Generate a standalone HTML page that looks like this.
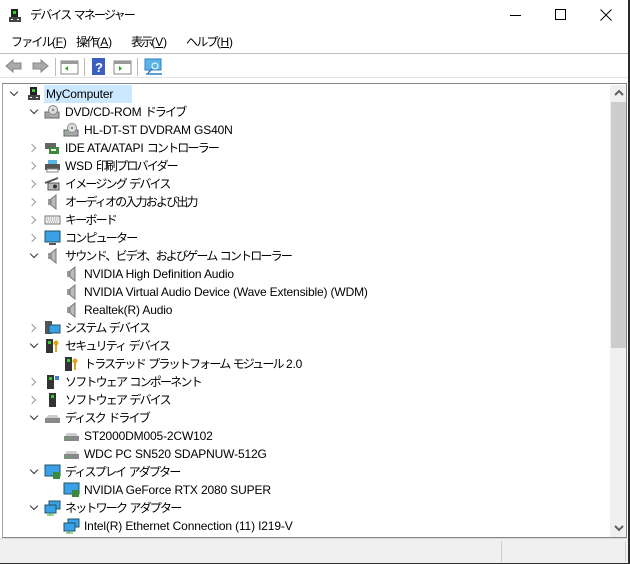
<!DOCTYPE html>
<html><head><meta charset="utf-8"><style>
*{margin:0;padding:0;box-sizing:border-box}
body{width:630px;height:564px;background:#fff;position:relative;overflow:hidden;font-family:"Liberation Sans","Noto Sans CJK JP",sans-serif;font-size:12px;color:#000}
.a{position:absolute}
.t{position:absolute;white-space:nowrap;line-height:18px;height:18px;letter-spacing:-0.15px}
.j{letter-spacing:-1.8px}
.arr{position:absolute;width:6px;height:6px;border-right:1.3px solid #999;border-bottom:1.3px solid #999}
.r{transform:rotate(-45deg)}
.d{transform:rotate(45deg);border-color:#333}
</style></head><body>
<div class="a" style="right:0;top:0;width:2px;height:564px;background:#2b2b2b"></div>
<div class="a" style="left:0;bottom:0;width:630px;height:1px;background:#2b2b2b"></div>
<svg class="a" style="left:8px;top:8px" width="14" height="16"><rect x="3" y="1" width="7" height="8" fill="#222"/><rect x="5" y="3" width="3" height="3" fill="#3c3"/><rect x="1" y="9" width="12" height="5" fill="#444"/><rect x="3" y="11" width="2" height="1" fill="#fff"/><rect x="9" y="11" width="2" height="1" fill="#fff"/></svg>
<div class="t" style="left:30px;top:6px">デバイス マネージャー</div>
<div class="a" style="left:510px;top:15px;width:11px;height:1px;background:#000"></div>
<div class="a" style="left:555px;top:9px;width:11px;height:11px;border:1px solid #000"></div>
<svg class="a" style="left:600px;top:9px" width="12" height="12"><path d="M0.5 0.5L11.5 11.5M11.5 0.5L0.5 11.5" stroke="#000"/></svg>
<div class="t" style="left:11px;top:33px">ファイル(<u>F</u>)</div>
<div class="t" style="left:76px;top:33px">操作(<u>A</u>)</div>
<div class="t" style="left:131px;top:33px">表示(<u>V</u>)</div>
<div class="t" style="left:186px;top:33px">ヘルプ(<u>H</u>)</div>
<div class="a" style="left:0;top:53px;width:628px;height:1px;background:#bcbcbc"></div>
<svg class="a" style="left:4px;top:57px" width="170" height="20">
<path d="M2 9L9 3V6H17V12H9V15Z" fill="#aaa" stroke="#888"/>
<path d="M44 9L37 3V6H29V12H37V15Z" fill="#aaa" stroke="#888"/>
<rect x="51" y="1" width="1" height="18" fill="#bbb"/>
<rect x="57" y="4" width="17" height="13" fill="#fff" stroke="#888"/><rect x="57" y="4" width="17" height="3" fill="#999"/><path d="M64 9L61 11.5L64 14Z" fill="#2a2"/>
<rect x="80" y="1" width="1" height="18" fill="#bbb"/>
<rect x="88" y="1" width="13" height="17" fill="#3b5fc0"/><text x="91" y="15" fill="#fff" font-size="13" font-weight="bold" font-family="Liberation Sans">?</text>
<rect x="110" y="4" width="17" height="13" fill="#fff" stroke="#888"/><rect x="110" y="4" width="17" height="3" fill="#999"/><path d="M115 9L118 11.5L115 14Z" fill="#2a2"/>
<rect x="133" y="1" width="1" height="18" fill="#bbb"/>
<rect x="141" y="2" width="16" height="11" fill="#5ab4e6" stroke="#2f7fc0"/><circle cx="151" cy="9" r="3" fill="none" stroke="#fff"/><path d="M148 12L144 16M142 17H158" stroke="#2f7fc0" stroke-width="1.5"/>
</svg>
<div class="a" style="left:0;top:77px;width:628px;height:1px;background:#e3e3e3"></div>
<div class="a" style="left:2px;top:83px;width:625px;height:455px;border:1px solid #828790;border-left-color:#a0a0a0"></div>
<div class="a" style="left:610px;top:85px;width:16px;height:452px;background:#f0f0f0"></div>
<div class="a" style="left:611px;top:102px;width:15px;height:246px;background:#cdcdcd"></div>
<svg class="a" style="left:613px;top:88px" width="12" height="10"><path d="M2 7L6 3L10 7" stroke="#606060" stroke-width="2" fill="none"/></svg>
<svg class="a" style="left:613px;top:523px" width="12" height="10"><path d="M2 3L6 7L10 3" stroke="#606060" stroke-width="2" fill="none"/></svg>
<div class="a" style="left:0;top:538px;width:628px;height:25px;background:#f0f0f0;border-top:1px solid #d8d8d8"></div>
<div class="a" style="left:501px;top:541px;width:1px;height:21px;background:#cfcfcf"></div>
<div class="a" style="left:625px;top:541px;width:1px;height:21px;background:#cfcfcf"></div>
<div class="a" style="left:44px;top:85px;width:88px;height:18px;background:#cce8ff"></div>
<div class="arr d" style="left:11px;top:89px"></div>
<svg class="a" style="left:26px;top:86px" width="16" height="16"><rect x="4" y="1" width="7" height="8" fill="#222"/><rect x="6" y="3" width="3" height="3" fill="#3c3"/><rect x="2" y="9" width="12" height="5" fill="#444"/><rect x="4" y="11" width="2" height="1" fill="#fff"/><rect x="10" y="11" width="2" height="1" fill="#fff"/></svg>
<div class="t" style="left:46px;top:85px">MyComputer</div>
<div id="tree"></div>
<script>
const rows=[
[1,'v','dvd','DVD/CD-ROM ドライブ'],[2,'','dvd','HL-DT-ST DVDRAM GS40N'],
[1,'>','ide','IDE ATA/ATAPI コントローラー'],[1,'>','prn','WSD 印刷プロバイダー'],
[1,'>','cam','イメージング デバイス'],[1,'>','spk','オーディオの入力および出力'],
[1,'>','kb','キーボード'],[1,'>','mon','コンピューター'],
[1,'v','spk','サウンド、ビデオ、およびゲーム コントローラー'],
[2,'','spk','NVIDIA High Definition Audio'],[2,'','spk','NVIDIA Virtual Audio Device (Wave Extensible) (WDM)'],[2,'','spk','Realtek(R) Audio'],
[1,'>','sys','システム デバイス'],[1,'v','sec','セキュリティ デバイス'],[2,'','sec','トラステッド プラットフォーム モジュール 2.0'],
[1,'>','swc','ソフトウェア コンポーネント'],[1,'>','swd','ソフトウェア デバイス'],
[1,'v','disk','ディスク ドライブ'],[2,'','disk','ST2000DM005-2CW102'],[2,'','disk','WDC PC SN520 SDAPNUW-512G'],
[1,'v','disp','ディスプレイ アダプター'],[2,'','disp','NVIDIA GeForce RTX 2080 SUPER'],
[1,'v','net','ネットワーク アダプター'],[2,'','net','Intel(R) Ethernet Connection (11) I219-V']];
const ic={
dvd:'<rect x="1" y="8" width="14" height="6" fill="#aaa" stroke="#666"/><circle cx="9" cy="6" r="4.5" fill="#ddd" stroke="#888"/><circle cx="9" cy="6" r="1.2" fill="#888"/><rect x="3" y="11" width="2" height="1" fill="#3c3"/>',
ide:'<rect x="1" y="3" width="11" height="6" fill="#666"/><rect x="5" y="7" width="10" height="7" fill="#3a8a3a"/><rect x="7" y="9" width="5" height="2" fill="#eee"/>',
prn:'<rect x="4" y="2" width="9" height="5" fill="#5ab4e6"/><rect x="1" y="6" width="15" height="6" fill="#555"/><rect x="3" y="11" width="11" height="3" fill="#fff" stroke="#888"/>',
cam:'<path d="M1 7L14 2" stroke="#555" stroke-width="2"/><rect x="4" y="7" width="11" height="7" fill="#bbb" stroke="#555"/><circle cx="11" cy="10.5" r="2" fill="#333"/>',
spk:'<rect x="4" y="5" width="3" height="6" fill="#999"/><path d="M7 5L12 1V15L7 11Z" fill="#bbb" stroke="#777"/>',
kb:'<rect x="1" y="4" width="15" height="8" fill="#eee" stroke="#777"/><path d="M3 6H14M3 8H14M4 10H13" stroke="#999" stroke-dasharray="1 1"/>',
mon:'<rect x="1" y="1" width="15" height="11" fill="#3aa0e8" stroke="#256"/><rect x="5" y="13" width="7" height="2" fill="#555"/>',
sys:'<rect x="1" y="1" width="7" height="13" fill="#555"/><rect x="5" y="5" width="11" height="8" fill="#3aa0e8" stroke="#256"/>',
sec:'<rect x="2" y="1" width="7" height="14" fill="#333"/><rect x="4" y="3" width="3" height="3" fill="#3c3"/><circle cx="12" cy="5" r="2.5" fill="#e0a020"/><rect x="11" y="7" width="2" height="7" fill="#e0a020"/>',
swc:'<rect x="3" y="1" width="7" height="14" fill="#333"/><rect x="5" y="3" width="3" height="3" fill="#3c3"/><rect x="11" y="2" width="4" height="4" fill="#3a7fd0"/>',
swd:'<rect x="5" y="1" width="7" height="14" fill="#333"/><rect x="7" y="3" width="3" height="3" fill="#3c3"/>',
disk:'<path d="M2 8L4 5H13L15 8Z" fill="#ccc"/><rect x="1" y="8" width="15" height="5" fill="#888"/><rect x="3" y="10" width="2" height="1" fill="#3c3"/>',
disp:'<rect x="1" y="1" width="15" height="11" fill="#3aa0e8" stroke="#256"/><rect x="9" y="8" width="7" height="7" fill="#3a8a3a"/>',
net:'<rect x="5" y="1" width="11" height="8" fill="#3aa0e8" stroke="#256"/><rect x="1" y="5" width="11" height="8" fill="#3aa0e8" stroke="#256"/><path d="M6 13V15M3 15H10" stroke="#3a3"/>'};
let h='';
rows.forEach((r,i)=>{const y=103+i*18;const L=r[0];
const ax=L==1?31:50,ix=L==1?44:63,tx=L==1?65:84;
if(r[1]=='v')h+=`<div class="arr d" style="left:${ax}px;top:${y+4}px"></div>`;
if(r[1]=='>')h+=`<div class="arr r" style="left:${ax-2}px;top:${y+6}px"></div>`;
h+=`<svg class="a" style="left:${ix}px;top:${y+1}px" width="17" height="16">${ic[r[2]]}</svg>`;
h+=`<div class="t" style="left:${tx}px;top:${y}px">${r[3]}</div>`;});
document.getElementById('tree').innerHTML=h;
document.querySelectorAll('.t').forEach(e=>{e.innerHTML=e.innerHTML.replace(/([\u3000-\u30ff\u4e00-\u9fff\uff00-\uffef]+)/g,'<span class="j">$1</span>');});
</script>
</body></html>
